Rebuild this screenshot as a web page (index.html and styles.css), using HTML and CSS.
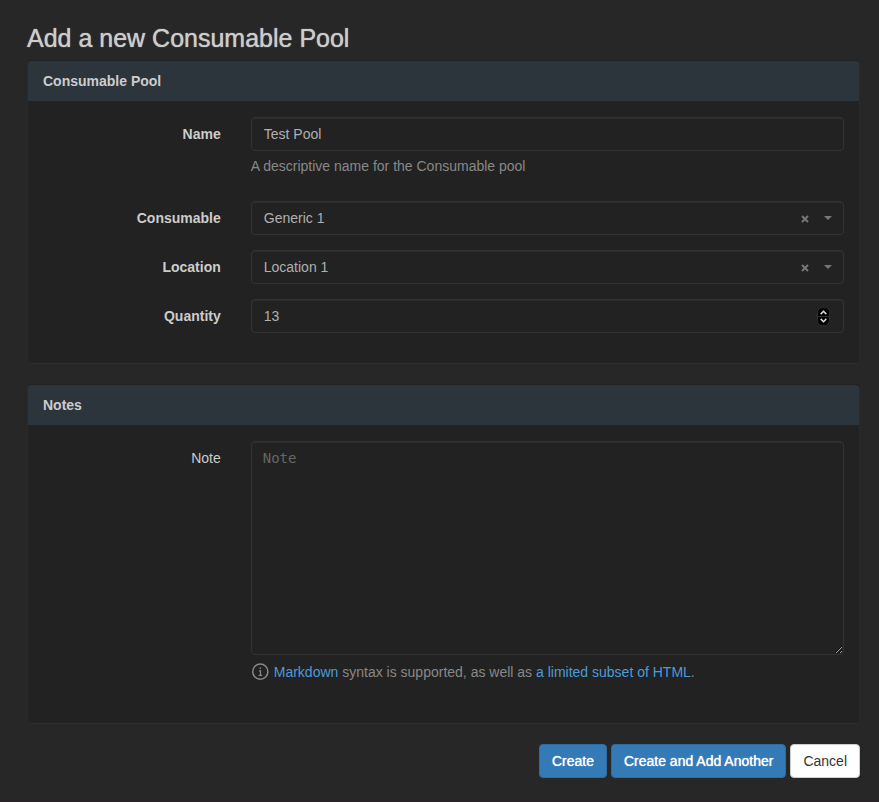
FILE: index.html
```html
<!DOCTYPE html>
<html lang="en">
<head>
<meta charset="utf-8">
<meta name="viewport" content="width=device-width, initial-scale=1">
<title>Add a new Consumable Pool</title>
<link rel="stylesheet" href="styles.css">
</head>
<body>
<main class="page">
  <h1 class="page-title">Add a new Consumable Pool</h1>
  <form class="pool-form">
    <section class="panel">
      <h2 class="panel-heading">Consumable Pool</h2>
      <div class="panel-body">
        <div class="form-group">
          <label class="label" for="name">Name</label>
          <div class="field">
            <input class="control" id="name" type="text" value="Test Pool">
            <p class="help">A descriptive name for the Consumable pool</p>
          </div>
        </div>
        <div class="form-group">
          <label class="label" for="consumable">Consumable</label>
          <div class="field">
            <select class="control" id="consumable"><option>Generic 1</option></select>
            <button class="clear" type="button" aria-label="Clear consumable"><svg width="8" height="8" viewBox="0 0 8 8"><path d="M1 1l6 6M7 1L1 7"/></svg></button>
            <svg class="caret" width="8" height="4" viewBox="0 0 8 4"><path d="M0 0h8L4 4z"/></svg>
          </div>
        </div>
        <div class="form-group">
          <label class="label" for="location">Location</label>
          <div class="field">
            <select class="control" id="location"><option>Location 1</option></select>
            <button class="clear" type="button" aria-label="Clear location"><svg width="8" height="8" viewBox="0 0 8 8"><path d="M1 1l6 6M7 1L1 7"/></svg></button>
            <svg class="caret" width="8" height="4" viewBox="0 0 8 4"><path d="M0 0h8L4 4z"/></svg>
          </div>
        </div>
        <div class="form-group">
          <label class="label" for="quantity">Quantity</label>
          <div class="field">
            <input class="control" id="quantity" type="number" value="13">
            <svg class="stepper" width="13" height="19" viewBox="0 0 13 19"><rect class="stepper-base" x=".5" y=".5" width="12" height="18" rx="5"/><path class="stepper-split" d="M1 9.5h11"/><path class="stepper-arrow" d="M3.7 7.1l2.8-2.8 2.8 2.8M3.7 11.9l2.8 2.8 2.8-2.8"/></svg>
          </div>
        </div>
      </div>
    </section>
    <section class="panel">
      <h2 class="panel-heading">Notes</h2>
      <div class="panel-body">
        <div class="form-group">
          <label class="label label-light" for="note">Note</label>
          <div class="field">
            <textarea class="control note" id="note" rows="10" placeholder="Note"></textarea>
            <p class="help help-note"><svg class="info" width="18" height="18" viewBox="0 0 18 18"><circle cx="9.3" cy="8.7" r="7.6"/><path class="info-stem" d="M8 7.8h1.5v4.4M7.6 12.3h3.6"/><path class="info-dot" d="M8.6 4.6h1.4V6H8.6z"/></svg><span><a href="#">Markdown</a> syntax is supported, as well as <a href="#">a limited subset of HTML</a>.</span></p>
          </div>
        </div>
      </div>
    </section>
    <div class="actions">
      <button class="btn btn-primary" type="submit">Create</button>
      <button class="btn btn-primary" type="submit">Create and Add Another</button>
      <a class="btn btn-default" href="#">Cancel</a>
    </div>
  </form>
</main>
</body>
</html>
```
FILE: styles.css
```css
* { box-sizing: border-box; }

body {
  min-height: 100vh;
  margin: 0;
  border-bottom: 1px solid #2c2228;
  background: #272727;
  color: #ccc;
  font: 14px/20px "Liberation Sans", Arial, sans-serif;
}

.page { padding: 24px 19px 20px 27px; }

.page-title {
  margin: 0 0 8px;
  font-size: 25px;
  line-height: 28px;
  font-weight: 500;
  text-shadow: 0 0 1px currentColor;
}

.panel {
  margin-bottom: 20px;
  border: 1px solid #292929;
  border-top-color: #222;
  border-bottom-color: #2e2e2e;
  border-radius: 4px;
  background: #222;
}

.panel-heading {
  margin: 0;
  padding: 10px 15px;
  border-bottom: 1px solid #222;
  border-radius: 3px 3px 0 0;
  background: #2d353c;
  font-size: 14px;
  line-height: 20px;
  font-weight: 700;
  background-clip: padding-box;
}

.panel-body { padding: 15px 0; }

.form-group {
  display: grid;
  grid-template-columns: 1fr 3fr;
  margin-bottom: 15px;
}

.label {
  padding: 7px 15px 0;
  text-align: right;
  font-weight: 700;
}

.label-light { font-weight: 400; }

.field {
  position: relative;
  padding: 0 15px;
}

.control {
  display: block;
  width: 100%;
  height: 34px;
  margin: 0;
  padding: 6px 12px;
  appearance: none;
  border: 1px solid #333;
  border-radius: 4px;
  background: #222;
  box-shadow: inset 0 1px 1px #2e2e2e;
  color: #b0b0b0;
  font: inherit;
}

input[type="number"] { appearance: textfield; }

.note {
  height: auto;
  padding: 6px 11px;
  font-family: "DejaVu Sans Mono", monospace;
}

.note::placeholder { color: #666; }

.clear {
  position: absolute;
  top: 9px;
  right: 46px;
  display: grid;
  place-items: center;
  width: 16px;
  height: 18px;
  padding: 0;
  border: 0;
  background: none;
}

.clear path { fill: none; stroke: #777; stroke-width: 2; }

.caret {
  position: absolute;
  top: 15px;
  right: 27px;
  fill: #777;
  pointer-events: none;
}

.stepper {
  position: absolute;
  top: 8px;
  right: 29px;
  pointer-events: none;
}

.stepper-base { fill: #000; stroke: #303030; }
.stepper-split { stroke: #303030; }
.stepper-arrow { fill: none; stroke: #ddd; stroke-width: 1.5; }

.help {
  margin: 5px 0 10px;
  color: #888;
}

.help-note {
  display: flex;
  align-items: center;
  gap: 5px;
  margin: 7px 0 11px;
}

.info { fill: none; stroke: #888; stroke-width: 1.5; }
.info-stem { stroke-width: 1.2; }
.info-dot { fill: #888; stroke: none; }

a { color: #4c9bd9; text-decoration: none; }

.actions {
  display: flex;
  justify-content: flex-end;
  gap: 4px;
}

.btn {
  padding: 6px 12px;
  border: 1px solid #2e6da4;
  border-radius: 4px;
  font: inherit;
}

.btn-primary {
  background: #337ab7;
  color: #fff;
  text-shadow: 0 0 1px currentColor;
}

.btn-default {
  border-color: #ccc;
  background: #fff;
  color: #333;
}
```
